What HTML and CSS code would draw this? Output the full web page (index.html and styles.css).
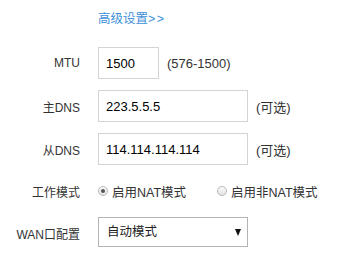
FILE: index.html
```html
<!DOCTYPE html>
<html lang="zh-CN">
<head>
    <meta charset="UTF-8">
    <meta name="viewport" content="width=device-width, initial-scale=1.0">
    <title>高级设置</title>
    <link rel="stylesheet" href="styles.css">
</head>
<body>

    <div class="panel">
        <div class="advanced">
            <a href="#" class="advanced-link">高级设置<span class="arrows">&gt;&gt;</span></a>
        </div>

        <div class="form">
            <div class="row">
                <label class="row-label">MTU</label>
                <input type="text" class="text-input input-short" value="1500">
                <span class="hint">(576-1500)</span>
            </div>

            <div class="row">
                <label class="row-label">主DNS</label>
                <input type="text" class="text-input input-long" value="223.5.5.5">
                <span class="hint">(可选)</span>
            </div>

            <div class="row">
                <label class="row-label">从DNS</label>
                <input type="text" class="text-input input-long" value="114.114.114.114">
                <span class="hint">(可选)</span>
            </div>

            <div class="row row-radio">
                <label class="row-label">工作模式</label>
                <label class="radio-option option-first">
                    <input type="radio" name="mode" checked>
                    <span>启用NAT模式</span>
                </label>
                <label class="radio-option">
                    <input type="radio" name="mode">
                    <span>启用非NAT模式</span>
                </label>
            </div>

            <div class="row">
                <label class="row-label">WAN口配置</label>
                <div class="select-wrap">
                    <select class="select">
                        <option>自动模式</option>
                    </select>
                </div>
            </div>
        </div>
    </div>

</body>
</html>
```

FILE: styles.css
```css
:root {
    --label-color: #333;
    --link-color: #3d8fd9;
    --border-color: #d4d4d4;
    --select-border: #b4b4b4;
}
body {
    margin: 0;
    background: #fff;
    font-family: "Liberation Sans", "Noto Sans CJK SC", sans-serif;
    font-size: 12px;
    color: var(--label-color);
}
.panel {
    padding-top: 11px;
}
.advanced {
    padding-left: 98px;
    height: 17px;
    line-height: 17px;
}
.advanced-link {
    color: var(--link-color);
    text-decoration: none;
    font-size: 12.5px;
}
.arrows { letter-spacing: 1.5px; }
.form {
    display: flex;
    flex-direction: column;
    gap: 11px;
    margin-top: 19px;
}
.row {
    display: flex;
    align-items: center;
    height: 32px;
}
.row-radio {
    height: 30px;
}
.row-label {
    width: 80px;
    text-align: right;
    margin-right: 18px;
    flex-shrink: 0;
}
.text-input {
    box-sizing: border-box;
    height: 32px;
    border: 1px solid var(--border-color);
    padding: 0 7px;
    font-family: inherit;
    font-size: 13px;
    color: #000;
    outline: none;
}
.input-short { width: 61px; }
.input-long { width: 150px; }
.hint {
    margin-left: 8px;
    font-size: 13px;
}
.radio-option {
    display: flex;
    align-items: center;
    font-size: 12.5px;
}
.option-first { width: 119px; }
.radio-option input {
    appearance: none;
    width: 10px;
    height: 10px;
    margin: 0 4px 0 0;
    border: 1px solid #b8b8b8;
    border-radius: 50%;
    background: linear-gradient(#fafafa, #e4e4e4);
    box-sizing: border-box;
    position: relative;
}
.radio-option input:checked::after {
    content: "";
    position: absolute;
    left: 2px;
    top: 2px;
    width: 4px;
    height: 4px;
    border-radius: 50%;
    background: #555;
}
.select-wrap {
    position: relative;
    margin-top: -3px;
}
.select {
    appearance: none;
    box-sizing: border-box;
    width: 150px;
    height: 30px;
    border: 1px solid var(--select-border);
    border-radius: 0;
    background: #fff;
    padding: 0 8px;
    font-family: inherit;
    font-size: 12.5px;
    color: #222;
    outline: none;
}
.select-wrap::after {
    content: "";
    position: absolute;
    right: 7px;
    top: 12px;
    border-left: 3.5px solid transparent;
    border-right: 3.5px solid transparent;
    border-top: 7px solid #111;
    pointer-events: none;
}
```
